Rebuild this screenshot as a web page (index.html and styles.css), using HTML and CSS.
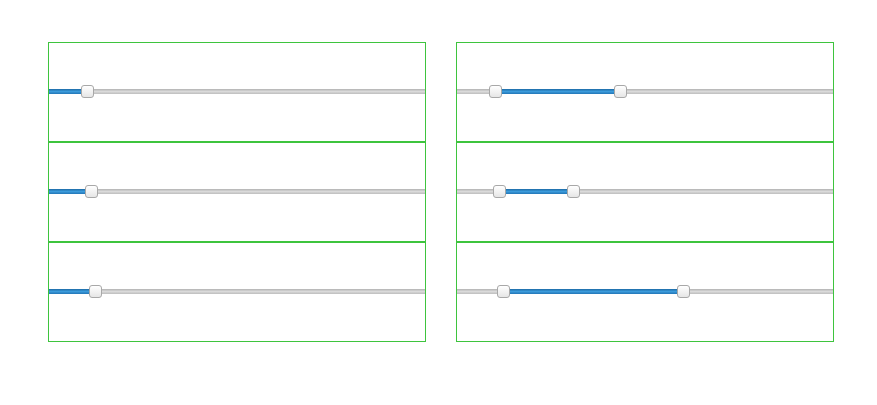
FILE: index.html
```html
<!DOCTYPE html>
<html lang="en">
<head>
    <meta charset="UTF-8">
    <meta name="viewport" content="width=device-width, initial-scale=1.0">
    <title>Sliders</title>
    <link rel="stylesheet" href="styles.css">
</head>
<body>
    <div class="page">
        <!-- single value sliders -->
        <div class="panel">
            <div class="row">
                <div class="slider">
                    <div class="fill" style="left: 0; width: 38px;"></div>
                    <div class="handle" style="left: 32px;"></div>
                </div>
            </div>
            <div class="row">
                <div class="slider">
                    <div class="fill" style="left: 0; width: 42px;"></div>
                    <div class="handle" style="left: 36px;"></div>
                </div>
            </div>
            <div class="row">
                <div class="slider">
                    <div class="fill" style="left: 0; width: 46px;"></div>
                    <div class="handle" style="left: 40px;"></div>
                </div>
            </div>
        </div>

        <!-- range sliders -->
        <div class="panel">
            <div class="row">
                <div class="slider">
                    <div class="fill" style="left: 38px; width: 125px;"></div>
                    <div class="handle" style="left: 32px;"></div>
                    <div class="handle" style="left: 157px;"></div>
                </div>
            </div>
            <div class="row">
                <div class="slider">
                    <div class="fill" style="left: 42px; width: 74px;"></div>
                    <div class="handle" style="left: 36px;"></div>
                    <div class="handle" style="left: 110px;"></div>
                </div>
            </div>
            <div class="row">
                <div class="slider">
                    <div class="fill" style="left: 46px; width: 180px;"></div>
                    <div class="handle" style="left: 40px;"></div>
                    <div class="handle" style="left: 220px;"></div>
                </div>
            </div>
        </div>
    </div>
</body>
</html>
```

FILE: styles.css
```css
body {
    margin: 0;
    font-family: 'Liberation Sans', Arial, sans-serif;
    background-color: #fff;
}

.page {
    display: flex;
    gap: 30px;
    padding: 42px 0 0 48px;
}

.panel {
    width: 378px;
    display: flex;
    flex-direction: column;
}

/* each row has its own green frame, so the lines between rows are doubled */
.row {
    height: 100px;
    box-sizing: border-box;
    border: 1px solid #3ec43e;
    padding-top: 46px;
}

/* the grey track */
.slider {
    position: relative;
    height: 5px;
    background: linear-gradient(#b2b2b2, #dadada 50%, #bdbdbd);
}

.fill {
    position: absolute;
    top: 0;
    height: 5px;
    background: linear-gradient(#1c6aa6, #3b9bdb 50%, #2275b6);
}

.handle {
    position: absolute;
    top: -4px;
    width: 13px;
    height: 13px;
    box-sizing: border-box;
    border: 1px solid #a8a8a8;
    border-radius: 3px;
    background: linear-gradient(#ffffff, #e6e6e6);
}
```
